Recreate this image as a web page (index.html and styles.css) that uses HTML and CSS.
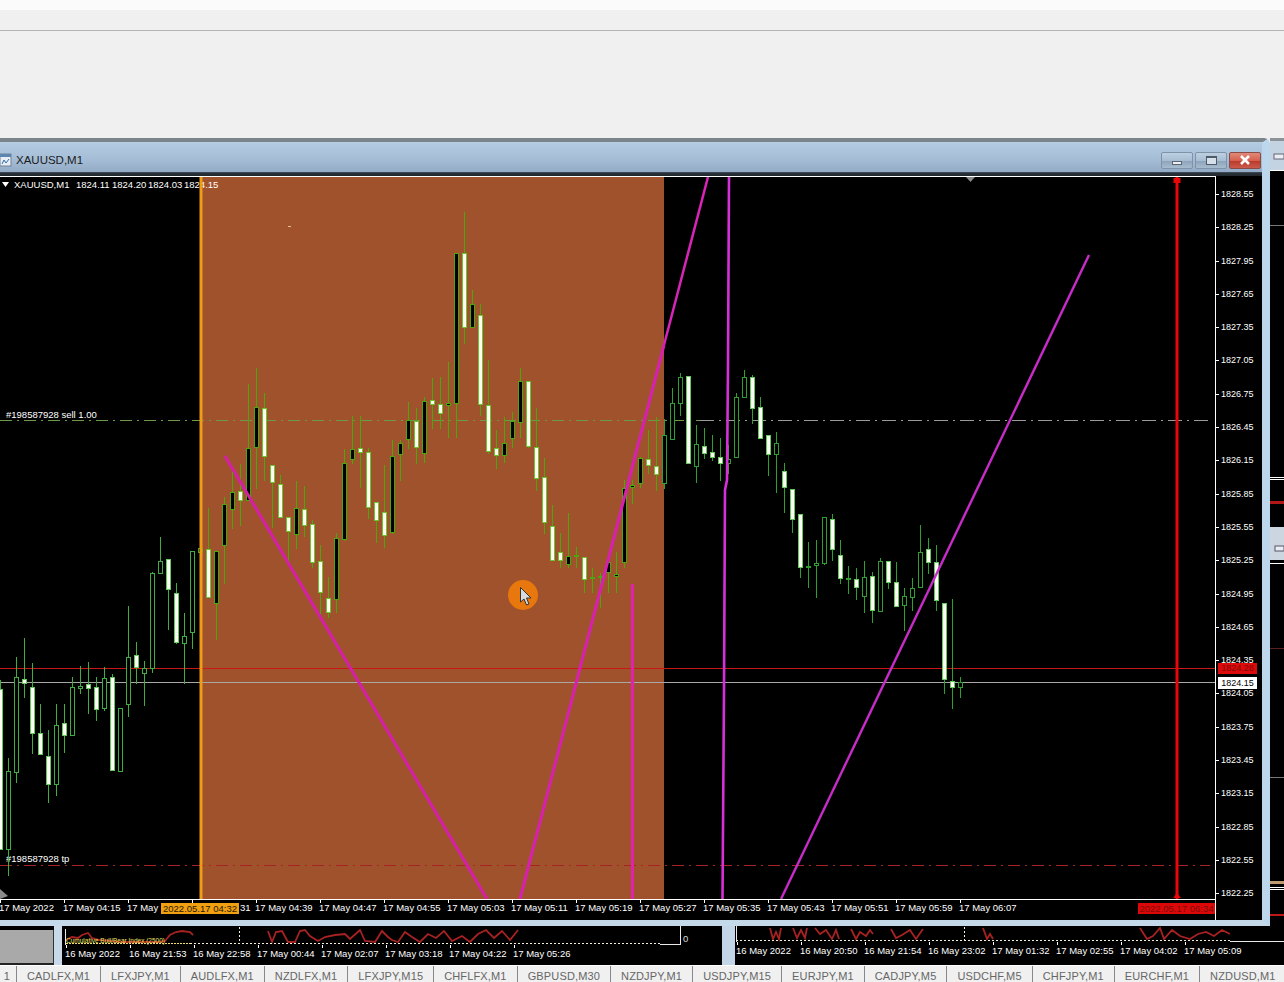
FILE: index.html
```html
<!DOCTYPE html>
<html lang="en">
<head>
    <meta charset="UTF-8">
    <title>XAUUSD,M1</title>
    <link rel="stylesheet" href="styles.css">
</head>
<body>
    <div id="toolbar">
        <div class="strip-top"></div>
        <div class="strip-menu"></div>
    </div>

    <div id="workspace">
        <div id="window">
            <div class="titlebar">
                <svg class="win-icon" width="12" height="14" viewBox="0 0 12 14">
                    <rect x="0" y="1" width="11" height="12" fill="#e8eef4" stroke="#6f8296"/>
                    <rect x="0" y="1" width="11" height="3" fill="#5b86b0"/>
                    <path d="M2 11 L4 7 L6 10 L9 6" fill="none" stroke="#2f6fa8"/>
                </svg>
                <span class="win-title">XAUUSD,M1</span>
                <div class="win-buttons">
                    <div class="win-btn"><span class="glyph-min"></span></div>
                    <div class="win-btn"><span class="glyph-max"></span></div>
                    <div class="win-btn close">
                        <svg width="12" height="10" viewBox="0 0 12 10"><path d="M2 1 L10 9 M10 1 L2 9" stroke="#fff" stroke-width="2.6"/></svg>
                    </div>
                </div>
            </div>
            <div class="client">
                <div class="chart-col">
                    <svg id="chart" width="1215" height="722" viewBox="0 177 1215 722"></svg>
                    <div class="time-axis">
                        <span>17 May 2022</span>
                        <span>17 May 04:15</span>
                        <span>17 May</span>
                        <span class="tail">31</span>
                        <span>17 May 04:39</span>
                        <span>17 May 04:47</span>
                        <span>17 May 04:55</span>
                        <span>17 May 05:03</span>
                        <span>17 May 05:11</span>
                        <span>17 May 05:19</span>
                        <span>17 May 05:27</span>
                        <span>17 May 05:35</span>
                        <span>17 May 05:43</span>
                        <span>17 May 05:51</span>
                        <span>17 May 05:59</span>
                        <span>17 May 06:07</span>
                        <div class="time-badge orange">2022.05.17 04:32</div>
                        <div class="time-badge red">2022.05.17 06:34</div>
                    </div>
                </div>
                <div class="price-axis">
                    <span>1828.55</span><span>1828.25</span><span>1827.95</span><span>1827.65</span>
                    <span>1827.35</span><span>1827.05</span><span>1826.75</span><span>1826.45</span>
                    <span>1826.15</span><span>1825.85</span><span>1825.55</span><span>1825.25</span>
                    <span>1824.95</span><span>1824.65</span><span>1824.35</span><span>1824.05</span>
                    <span>1823.75</span><span>1823.45</span><span>1823.15</span><span>1822.85</span>
                    <span>1822.55</span><span>1822.25</span>
                    <div class="price-badge ask">1824.28</div>
                    <div class="price-badge bid">1824.15</div>
                </div>
            </div>
        </div>
        <svg id="side" width="14" height="788" viewBox="1270 138 14 788">
            <rect x="1270" y="138" width="14" height="788" fill="#000"/>
            <rect x="1270" y="138" width="14" height="3" fill="#8b9399"/>
            <rect x="1270" y="141" width="14" height="29" fill="#c3d3e2"/>
            <rect x="1274" y="154" width="10" height="5" fill="#e8eef4" stroke="#667"/>
            <rect x="1270" y="170" width="14" height="1" fill="#fff"/>
            <rect x="1270" y="225" width="14" height="1" fill="#777"/>
            <rect x="1270" y="477" width="14" height="1" fill="#fff"/>
            <rect x="1270" y="479" width="14" height="1" fill="#fff"/>
            <rect x="1270" y="501" width="14" height="3" fill="#b01818"/>
            <rect x="1270" y="527" width="14" height="33" fill="#ccd6e0"/>
            <rect x="1275" y="546" width="9" height="5" fill="#e8eef4" stroke="#556"/>
            <rect x="1270" y="563" width="14" height="1" fill="#fff"/>
            <rect x="1270" y="648" width="14" height="1" fill="#5a2020"/>
            <rect x="1270" y="777" width="14" height="1" fill="#777"/>
            <rect x="1270" y="881" width="14" height="3" fill="#c09a70"/>
            <rect x="1270" y="887" width="14" height="1" fill="#fff"/>
            <rect x="1270" y="889" width="14" height="1" fill="#fff"/>
            <rect x="1270" y="914" width="14" height="2" fill="#c01818"/>
        </svg>
    </div>

    <div id="lower">
        <div class="mini-blank"></div>
        <div class="mini-gap"></div>
        <div class="mini-chart left">
            <svg width="660" height="19" viewBox="62 926 660 19">
                <polyline class="ind" points="66,940 72,937 78,938 82,935 88,933 92,938 100,940 110,941 120,942 135,942 150,942 160,942 165,941 170,935 176,932 182,931 190,932 193,935"/>
                <polyline class="ind" points="268,931 272,942 276,932 282,931 288,942 295,942 300,931 305,930 310,936 318,941 325,937 335,935 345,934 350,939 360,930 365,941 375,942 382,931 388,937 392,940 398,942 405,932 412,937 420,942 428,934 436,938 444,931 452,941 462,936 470,942 478,934 486,930 494,938 502,931 510,940 518,930"/>
                <text class="ind-name" x="66" y="943">Cumulative Bull/Bear Index (2500)</text>
                <line class="dash-y" x1="66" y1="943.5" x2="190" y2="943.5"/>
                <line class="dash-w" x1="190" y1="943.5" x2="660" y2="943.5"/>
                <line class="dash-w" x1="239.5" y1="927" x2="239.5" y2="943"/>
                <line class="axis-w" x1="65.5" y1="929" x2="65.5" y2="945"/>
                <line class="axis-w" x1="660" y1="944.5" x2="680" y2="944.5"/>
                <line class="axis-w" x1="680.5" y1="926" x2="680.5" y2="945"/>
                <text class="zero" x="683" y="942">0</text>
            </svg>
            <div class="mini-axis">
                <span>16 May 2022</span><span>16 May 21:53</span><span>16 May 22:58</span><span>17 May 00:44</span>
                <span>17 May 02:07</span><span>17 May 03:18</span><span>17 May 04:22</span><span>17 May 05:26</span>
            </div>
        </div>
        <div class="mini-split"></div>
        <div class="mini-chart right">
            <svg width="549" height="16" viewBox="735 926 549 16">
                <polyline class="ind" points="770,928 773,939 776,932 779,939 781,928"/>
                <polyline class="ind" points="793,928 797,938 801,930 805,938 807,928"/>
                <polyline class="ind" points="815,928 820,934 826,930 832,939 836,930 839,939"/>
                <polyline class="ind" points="851,929 856,939 860,932 866,936 870,930 873,934"/>
                <polyline class="ind" points="891,929 896,938 902,935 910,930 916,939 923,929"/>
                <polyline class="ind" points="983,928 987,939 990,934 993,939"/>
                <polyline class="ind" points="1140,928 1147,939 1153,936 1160,928 1164,939 1172,930 1180,936 1190,939 1198,934 1206,932 1214,936 1222,930 1230,934"/>
                <line class="dash-w" x1="736" y1="940.5" x2="1230" y2="940.5"/>
                <line class="dash-w" x1="964.5" y1="927" x2="964.5" y2="940"/>
                <line class="axis-w" x1="736.5" y1="926" x2="736.5" y2="942"/>
                <line class="axis-w" x1="1230" y1="941.5" x2="1284" y2="941.5"/>
            </svg>
            <div class="mini-axis">
                <span>16 May 2022</span><span>16 May 20:50</span><span>16 May 21:54</span><span>16 May 23:02</span>
                <span>17 May 01:32</span><span>17 May 02:55</span><span>17 May 04:02</span><span>17 May 05:09</span>
            </div>
        </div>
    </div>

    <div id="tabs">
        <div class="tab first">1</div>
        <div class="tab">CADLFX,M1</div>
        <div class="tab">LFXJPY,M1</div>
        <div class="tab">AUDLFX,M1</div>
        <div class="tab">NZDLFX,M1</div>
        <div class="tab">LFXJPY,M15</div>
        <div class="tab">CHFLFX,M1</div>
        <div class="tab">GBPUSD,M30</div>
        <div class="tab">NZDJPY,M1</div>
        <div class="tab">USDJPY,M15</div>
        <div class="tab">EURJPY,M1</div>
        <div class="tab">CADJPY,M5</div>
        <div class="tab">USDCHF,M5</div>
        <div class="tab">CHFJPY,M1</div>
        <div class="tab">EURCHF,M1</div>
        <div class="tab">NZDUSD,M1</div>
    </div>

    <script src="chart.js"></script>
</body>
</html>
```

FILE: styles.css
```css
* {
    box-sizing: border-box;
}

html, body {
    margin: 0;
    height: 982px;
    overflow: hidden;
}

body {
    width: 1284px;
    font-family: "Liberation Sans", Arial, sans-serif;
    background: #f0f0f0;
}

#toolbar {
    height: 138px;
    background: #f0f0f0;
}

.strip-top {
    height: 10px;
    background: #fbfbfb;
}

.strip-menu {
    height: 21px;
    border-bottom: 1px solid #b4b4b4;
}

#workspace {
    display: flex;
    height: 788px;
}

#window {
    width: 1270px;
    display: flex;
    flex-direction: column;
    background: #000;
    border-top: 4px solid #7b848a;
    border-right: 8px solid #bcd6ec;
    border-bottom: 6px solid #c4d9ea;
    border-top-right-radius: 6px;
}

.titlebar {
    height: 34px;
    flex: none;
    display: flex;
    align-items: center;
    background: linear-gradient(#b5cde3, #a3bbd4 55%, #93abc6 88%, #2c343c 90%, #20272d);
    padding-top: 2px;
}

.win-icon {
    flex: none;
}

.win-title {
    margin-left: 4px;
    font-size: 11.5px;
    color: #1c1c1c;
}

.win-buttons {
    margin-left: auto;
    margin-right: 1px;
    display: flex;
    gap: 2px;
}

.win-btn {
    width: 32px;
    height: 17px;
    display: flex;
    align-items: center;
    justify-content: center;
    border: 1px solid #7f93a8;
    border-radius: 2px;
    background: linear-gradient(#bdd0e2, #a9bdd2 50%, #8ea4ba 55%, #a8bccf);
}

.win-btn.close {
    background: linear-gradient(#e08a78, #d6604e 50%, #bb3a2c 55%, #c95a4a);
    border-color: #8a4a48;
}

.glyph-min {
    width: 10px;
    height: 4px;
    margin-top: 5px;
    background: #e8eef4;
    border: 1px solid #5a6672;
}

.glyph-max {
    width: 11px;
    height: 9px;
    background: #d4dfea;
    border: 1px solid #4e5a66;
    border-top-width: 2px;
}

.client {
    flex: 1;
    display: flex;
    background: #000;
}

.chart-col {
    width: 1216px;
    border-top: 1px solid #fff;
    border-right: 1px solid #fff;
}

#chart {
    display: block;
    background: #000;
}

#chart text {
    font-size: 9.5px;
    fill: #fff;
}

.time-axis {
    position: relative;
    height: 21px;
    border-top: 1px solid #fff;
    display: flex;
    margin-left: -1px;
    font-size: 9.5px;
    color: #fff;
    overflow: hidden;
}

.time-axis span {
    position: relative;
    flex: none;
    width: 64px;
    line-height: 16px;
    white-space: nowrap;
}

.time-axis span::before,
.mini-axis span::before {
    content: "";
    position: absolute;
    left: 1px;
    top: 0;
    width: 1px;
    height: 3px;
    background: #fff;
}

.time-axis span.tail {
    padding-left: 49px;
}

.time-badge {
    position: absolute;
    top: 3px;
    height: 11px;
    line-height: 11px;
    font-size: 9.5px;
    text-align: center;
}

.time-badge.orange {
    left: 162px;
    width: 78px;
    background: #f0a010;
    color: #2a1800;
}

.time-badge.red {
    left: 1139px;
    width: 77px;
    background: #dc0808;
    color: #800808;
}

.price-axis {
    position: relative;
    flex: 1;
    display: flex;
    flex-direction: column;
    border-top: 2px solid #000;
    font-size: 9px;
    color: #fff;
    padding-left: 5px;
}

.price-axis span {
    position: relative;
    flex: none;
    height: 33.3px;
    line-height: 33.3px;
}

.price-axis span::before {
    content: "";
    position: absolute;
    left: -5px;
    top: 16px;
    width: 3px;
    height: 1px;
    background: #fff;
}

.price-badge {
    position: absolute;
    left: 2px;
    width: 39px;
    text-align: center;
    font-size: 9px;
}

.price-badge.ask {
    top: 485px;
    height: 11px;
    line-height: 11px;
    background: #dc0a0a;
    color: #800808;
}

.price-badge.bid {
    top: 499px;
    height: 12px;
    line-height: 12px;
    background: #fff;
    color: #000;
}

#side {
    display: block;
}

#lower {
    height: 39px;
    display: flex;
    background: #000;
}

.mini-blank {
    width: 54px;
    margin-top: 4px;
    background: #a9a9a9;
    border-right: 1px solid #333;
    border-bottom: 2px solid #222;
}

.mini-gap {
    width: 8px;
    background: #c8d9ea;
}

.mini-split {
    width: 13px;
    background: #c2d6e8;
}

.mini-chart svg {
    display: block;
}

.mini-chart.left {
    width: 660px;
}

.mini-chart.right {
    flex: 1;
    min-width: 0;
    overflow: hidden;
}

.ind {
    fill: none;
    stroke: #a82222;
    stroke-width: 1.8;
}

.ind-name {
    font-size: 6.5px;
    fill: #e8e060;
}

.dash-y {
    stroke: #f0e070;
    stroke-dasharray: 2 1;
}

.dash-w {
    stroke: #f4f0d8;
    stroke-dasharray: 2 2;
}

.axis-w {
    stroke: #e8e8e8;
}

.zero {
    font-size: 9.5px;
    fill: #ddd;
}

.mini-axis {
    display: flex;
    height: 20px;
    font-size: 9.5px;
    line-height: 17px;
    color: #fff;
}

.mini-axis span {
    position: relative;
    flex: none;
    width: 64px;
    white-space: nowrap;
}

.mini-chart.left .mini-axis {
    padding-left: 3px;
}

.mini-chart.right .mini-axis {
    padding-left: 1px;
}

#tabs {
    height: 17px;
    display: flex;
    background: #f0f0f0;
    border-top: 1px solid #fff;
    font-size: 11px;
    line-height: 20px;
    letter-spacing: 0.15px;
    color: #666;
    overflow: hidden;
}

.tab {
    flex: none;
    padding: 0 10px;
    border-right: 1px solid #888;
    white-space: nowrap;
}

.tab.first {
    width: 17px;
    padding: 0 6px 0 0;
    text-align: right;
}
```

FILE: chart.js
```js
// high, body top, body bottom, low, w = white body / d = dark body
const candles = [
    [680, 689, 849, 849, "w"], [758, 771, 849, 875, "d"], [657, 677, 772, 782, "d"], [638, 679, 683, 697, "w"],
    [663, 687, 733, 753, "w"], [704, 733, 754, 754, "w"], [730, 756, 784, 802, "w"], [704, 725, 784, 795, "d"],
    [704, 723, 735, 752, "w"], [677, 687, 735, 735, "d"], [666, 686, 688, 693, "d"], [662, 684, 688, 713, "w"],
    [677, 687, 709, 720, "w"], [667, 678, 708, 710, "d"], [674, 677, 770, 770, "w"], [708, 708, 771, 771, "d"],
    [606, 657, 704, 716, "d"], [642, 655, 667, 683, "w"], [661, 668, 673, 705, "d"], [572, 573, 668, 672, "d"],
    [537, 561, 573, 573, "d"], [559, 559, 589, 629, "w"], [583, 593, 642, 643, "w"], [613, 636, 643, 683, "d"],
    [551, 551, 632, 648, "d"], [546, 548, 552, 560, "d"], [508, 549, 597, 597, "w"], [551, 551, 603, 639, "d"],
    [497, 504, 545, 583, "d"], [472, 492, 509, 528, "d"], [464, 491, 500, 525, "w"], [384, 448, 500, 500, "d"],
    [368, 407, 447, 488, "d"], [393, 408, 456, 480, "w"], [465, 465, 482, 527, "w"], [475, 484, 517, 517, "w"],
    [517, 517, 531, 560, "w"], [481, 508, 534, 548, "d"], [486, 509, 525, 536, "w"], [520, 524, 562, 567, "w"],
    [545, 561, 592, 613, "w"], [577, 598, 612, 617, "w"], [533, 538, 599, 612, "d"], [449, 463, 539, 540, "d"],
    [416, 449, 459, 463, "d"], [416, 448, 452, 487, "w"], [448, 452, 507, 518, "w"], [502, 502, 520, 542, "w"],
    [465, 512, 535, 547, "w"], [440, 456, 532, 533, "d"], [440, 443, 454, 480, "d"], [402, 420, 439, 448, "d"],
    [408, 421, 447, 463, "w"], [397, 401, 453, 462, "d"], [378, 400, 404, 428, "w"], [377, 404, 413, 428, "w"],
    [362, 403, 405, 437, "d"], [253, 253, 403, 437, "d"], [212, 253, 327, 343, "w"], [290, 304, 327, 327, "d"],
    [304, 315, 404, 415, "w"], [360, 405, 451, 453, "w"], [430, 448, 455, 468, "w"], [417, 443, 455, 462, "d"],
    [412, 421, 438, 447, "d"], [368, 381, 422, 437, "d"], [381, 381, 446, 447, "w"], [408, 447, 478, 490, "w"],
    [458, 477, 522, 533, "w"], [505, 526, 560, 560, "w"], [533, 552, 560, 567, "w"], [513, 556, 564, 567, "d"],
    [547, 555, 556, 567, "d"], [557, 557, 579, 592, "w"], [568, 577, 578, 592, "d"], [573, 576, 577, 607, "d"],
    [560, 562, 572, 592, "d"], [552, 574, 576, 592, "d"], [480, 488, 562, 567, "d"], [480, 485, 487, 503, "d"],
    [457, 458, 483, 487, "d"], [430, 459, 465, 473, "w"], [417, 466, 474, 490, "w"], [419, 435, 483, 488, "d"],
    [388, 403, 439, 439, "d"], [373, 377, 403, 415, "d"], [376, 376, 463, 463, "w"], [425, 444, 466, 482, "d"],
    [428, 446, 453, 458, "w"], [435, 452, 457, 460, "w"], [438, 457, 463, 480, "w"], [445, 459, 463, 473, "d"],
    [393, 397, 457, 457, "d"], [370, 377, 397, 397, "d"], [375, 377, 408, 423, "w"], [397, 407, 438, 438, "w"],
    [435, 435, 454, 475, "w"], [432, 443, 454, 492, "d"], [463, 471, 487, 512, "w"], [489, 489, 519, 532, "w"],
    [514, 514, 567, 577, "w"], [542, 566, 567, 587, "d"], [540, 563, 565, 597, "d"], [517, 517, 563, 564, "d"],
    [514, 519, 549, 560, "w"], [540, 555, 578, 583, "w"], [566, 578, 579, 593, "d"], [568, 579, 587, 599, "w"],
    [561, 577, 596, 612, "d"], [572, 576, 610, 622, "w"], [558, 561, 611, 611, "d"], [561, 561, 582, 588, "w"],
    [562, 582, 606, 606, "w"], [588, 596, 605, 630, "d"], [578, 588, 597, 610, "d"], [525, 552, 587, 587, "d"],
    [538, 549, 562, 573, "w"], [545, 562, 600, 610, "w"], [603, 603, 679, 693, "w"], [599, 681, 687, 708, "w"],
    [677, 682, 687, 697, "d"]
];

const chart = document.getElementById("chart");
let parts = [];

function line(x1, y1, x2, y2, color, width, dash) {
    const d = dash ? ` stroke-dasharray="${dash}"` : "";
    parts.push(`<line x1="${x1}" y1="${y1}" x2="${x2}" y2="${y2}" stroke="${color}" stroke-width="${width}"${d}/>`);
}

function rect(x, y, w, h, color) {
    parts.push(`<rect x="${x}" y="${y}" width="${w}" height="${h}" fill="${color}"/>`);
}

// session box and legend
rect(200, 177, 464, 722, "#a0522d");
parts.push(`<path d="M2 182 H9 L5.5 187 Z" fill="#fff"/>`);
parts.push(`<text y="188"><tspan x="14">XAUUSD,M1</tspan><tspan x="76">1824.11</tspan><tspan x="112">1824.20</tspan><tspan x="148">1824.03</tspan><tspan x="184">1824.15</tspan></text>`);

// order lines
line(0, 420.5, 700, 420.5, "#6f9a45", 1, "12 5 2 5");
line(700, 420.5, 1210, 420.5, "#9a9a9a", 1, "14 5 2 5");
line(0, 865.5, 1210, 865.5, "#a82424", 1, "12 5 2 5");
parts.push(`<text x="6" y="418">#198587928 sell 1.00</text>`);
parts.push(`<text x="6" y="862">#198587928 tp</text>`);

// bid and ask
line(0, 668.5, 1215, 668.5, "#c81818", 1);
line(0, 682.5, 1215, 682.5, "#a8a8a8", 1);

// candles
parts.push(`<g shape-rendering="crispEdges">`);
candles.forEach((c, i) => {
    const x = i * 8;
    const onBox = x >= 200 && x < 664;
    const green = onBox ? "#4aa80e" : (x < 200 ? "#3fae3f" : "#2f9f2f");
    const edge = c[4] === "w" ? (onBox ? "#6cc430" : "#62cc58") : green;
    rect(x, c[0], 1, c[3] - c[0] + 1, green);
    rect(x - 2, c[1], 5, Math.max(c[2] - c[1] + 1, 2), edge);
    if (c[2] - c[1] > 1) {
        rect(x - 1, c[1] + 1, 3, c[2] - c[1] - 1, c[4] === "w" ? "#fbfff4" : "#000");
    }
});
parts.push(`</g>`);

// trend lines
line(225, 456, 487, 899, "#d61fa8", 3);
line(520, 899, 664, 345, "#d820b0", 3);
line(664, 345, 708, 177, "#d824b8", 2.5);
line(632.5, 584, 632.5, 899, "#e022ac", 3);
parts.push(`<polyline points="729,177 728,365 727,480 725,490 724,690 722.5,899" fill="none" stroke="#d830d8" stroke-width="2.6"/>`);
line(781, 899, 1089, 255, "#c82cc8", 2.4);

// session start and end markers
rect(199.5, 177, 3, 722, "#f09c14");
rect(1175.5, 177, 3, 722, "#e80606");
rect(1173.5, 178, 7, 5, "#e80606");
parts.push(`<path d="M1173 898 L1177 893 L1181 898 Z" fill="#e80606"/>`);
parts.push(`<path d="M966 177 H975 L970.5 182 Z" fill="#8a8a8a"/>`);
parts.push(`<path d="M0 889 L8 896 L0 899 Z" fill="#8a8a8a"/>`);
rect(288, 226, 3, 1, "#e8c0a0");

// mouse highlight
parts.push(`<circle cx="523" cy="595" r="15" fill="#e8780e"/>`);
parts.push(`<path d="M520.5 587.5 V602 L524 599 L526.5 605 L529 604 L526.5 598 L531 598 Z" fill="#d8dcdc" stroke="#333" stroke-width="1"/>`);

chart.innerHTML = parts.join("");
```
